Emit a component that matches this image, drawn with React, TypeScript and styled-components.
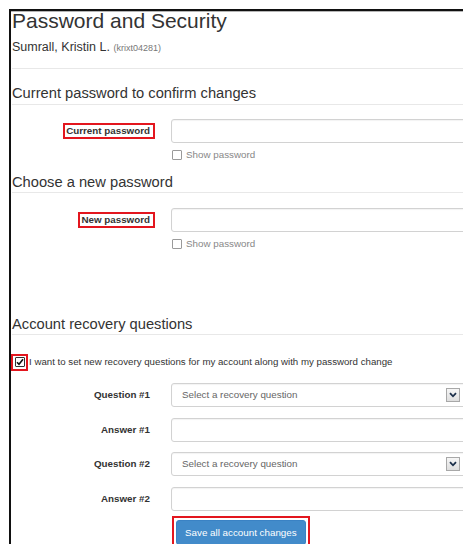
import React from "react";
import styled, { createGlobalStyle } from "styled-components";

const GlobalStyle = createGlobalStyle`
  html, body {
    margin: 0;
    padding: 0;
    background: #fff;
    overflow: hidden;
  }
  body {
    font-family: "Liberation Sans", Arial, Helvetica, sans-serif;
    color: #333;
  }
  * { box-sizing: border-box; }
`;

const Frame = styled.div`
  margin: 9px 0 0 9px;
  width: 480px;
  border-top: 2px solid #111;
  border-left: 2px solid #111;
  box-shadow: inset 0 1px 0 #b5b5b5;
  padding-bottom: 40px;
`;

const Content = styled.div`
  display: flex;
  flex-direction: column;
  padding-left: 1px;
`;

const Title = styled.h1`
  margin: 2px 0 0;
  font-size: 21px;
  line-height: 16px;
  font-weight: normal;
  color: #333;
`;

const UserName = styled.div`
  margin-top: 11px;
  font-size: 12.5px;
  line-height: 14px;
  color: #333;
`;

const UserId = styled.small`
  font-size: 9px;
  color: #777;
`;

const Rule = styled.div<{ $top: number }>`
  margin-top: ${(p) => p.$top}px;
  height: 1px;
  background: #e8e8e8;
`;

const SectionHeading = styled.h2<{ $top: number }>`
  margin: ${(p) => p.$top}px 0 0;
  font-size: 14.7px;
  line-height: 17px;
  font-weight: normal;
  color: #333;
`;

const FieldRow = styled.div<{ $top: number }>`
  margin-top: ${(p) => p.$top}px;
  display: grid;
  grid-template-columns: 138px 1fr;
  column-gap: 21px;
  align-items: center;
`;

const FieldLabel = styled.label`
  text-align: right;
  font-weight: bold;
  font-size: 9.8px;
  line-height: 12px;
  color: #333;
`;

const Marked = styled.span`
  display: inline-block;
  border: 2px solid #e3161e;
  padding: 1px 3px 1px 1px;
  margin-right: -5px;
  line-height: 10px;
`;

const TextInput = styled.input`
  display: block;
  width: 100%;
  height: 24px;
  margin: 0;
  padding: 0 8px;
  border: 1px solid #d2d2d2;
  border-radius: 3px;
  box-shadow: inset 0 1px 1px rgba(0, 0, 0, 0.05);
  background: #fff;
  font: inherit;
  font-size: 9.8px;
  outline: none;
`;

const SelectBox = styled.div`
  display: flex;
  align-items: center;
  justify-content: space-between;
  height: 24px;
  padding: 0 28px 1px 10px;
  border: 1px solid #d2d2d2;
  border-radius: 3px;
  box-shadow: inset 0 1px 1px rgba(0, 0, 0, 0.05);
  background: #fff;
  font-size: 9.8px;
  color: #666;
  cursor: default;
`;

const DropButton = styled.span`
  display: flex;
  align-items: center;
  justify-content: center;
  width: 14px;
  height: 14px;
  border: 1px solid #a8a8a8;
  background: linear-gradient(#f6f6f6, #dedede);
`;

const OptionRow = styled.label<{ $top: number }>`
  margin-top: ${(p) => p.$top}px;
  display: flex;
  align-items: center;
  gap: 4px;
  padding-left: 160px;
  font-size: 9.8px;
  line-height: 14px;
  color: #888;
`;

const Box = styled.span<{ $checked?: boolean }>`
  display: inline-flex;
  align-items: center;
  justify-content: center;
  width: 10px;
  height: 10px;
  border: 1px solid ${(p) => (p.$checked ? "#333" : "#9a9a9a")};
  border-radius: 1px;
  background: #fff;
`;

const ConsentRow = styled.label`
  margin: 18px 0 0 -1px;
  display: flex;
  align-items: center;
  gap: 1px;
  font-size: 9.7px;
  line-height: 18px;
  color: #333;
`;

const BoxFrame = styled.span`
  display: inline-flex;
  padding: 1.5px;
  border: 2px solid #e3161e;
`;

const ActionRow = styled.div`
  margin-top: 5.5px;
  padding-left: 160px;
  display: flex;
`;

const ButtonFrame = styled.span`
  display: inline-flex;
  padding: 2px;
  border: 2px solid #e3161e;
`;

const SaveButton = styled.button`
  height: 25px;
  padding: 0 8px;
  border: 1px solid #3a82c4;
  border-radius: 3px;
  background: #428bca;
  color: #fff;
  font-family: inherit;
  font-size: 9.8px;
  cursor: pointer;
`;

const Chevron = () => (
  <svg width="8" height="6" viewBox="0 0 8 6">
    <path d="M1 1.2 L4 4.3 L7 1.2" fill="none" stroke="#1b2f4a" strokeWidth="1.8" />
  </svg>
);

const Tick = () => (
  <svg width="8" height="8" viewBox="0 0 8 8">
    <path d="M1 4.2 L3 6.3 L7 1.3" fill="none" stroke="#111" strokeWidth="1.6" />
  </svg>
);

const ShowPassword = ({ top }: { top: number }) => (
  <OptionRow $top={top}>
    <Box />
    Show password
  </OptionRow>
);

const QuestionSelect = () => (
  <SelectBox>
    <span>Select a recovery question</span>
    <DropButton>
      <Chevron />
    </DropButton>
  </SelectBox>
);

export default function App() {
  return (
    <>
      <GlobalStyle />
      <Frame>
        <Content>
          <Title>Password and Security</Title>
          <UserName>
            Sumrall, Kristin L. <UserId>(krixt04281)</UserId>
          </UserName>
          <Rule $top={13} />

          <SectionHeading $top={16}>Current password to confirm changes</SectionHeading>
          <Rule $top={2} />
          <FieldRow $top={14}>
            <FieldLabel>
              <Marked>Current password</Marked>
            </FieldLabel>
            <TextInput type="password" />
          </FieldRow>
          <ShowPassword top={5} />

          <SectionHeading $top={12}>Choose a new password</SectionHeading>
          <Rule $top={1} />
          <FieldRow $top={15}>
            <FieldLabel>
              <Marked>New password</Marked>
            </FieldLabel>
            <TextInput type="password" />
          </FieldRow>
          <ShowPassword top={5} />

          <SectionHeading $top={65}>Account recovery questions</SectionHeading>
          <Rule $top={1} />
          <ConsentRow>
            <BoxFrame>
              <Box $checked>
                <Tick />
              </Box>
            </BoxFrame>
            I want to set new recovery questions for my account along with my password change
          </ConsentRow>

          <FieldRow $top={12}>
            <FieldLabel>Question #1</FieldLabel>
            <QuestionSelect />
          </FieldRow>
          <FieldRow $top={10.5}>
            <FieldLabel>Answer #1</FieldLabel>
            <TextInput type="text" />
          </FieldRow>
          <FieldRow $top={10.5}>
            <FieldLabel>Question #2</FieldLabel>
            <QuestionSelect />
          </FieldRow>
          <FieldRow $top={10.5}>
            <FieldLabel>Answer #2</FieldLabel>
            <TextInput type="text" />
          </FieldRow>
          <ActionRow>
            <ButtonFrame>
              <SaveButton type="button">Save all account changes</SaveButton>
            </ButtonFrame>
          </ActionRow>
        </Content>
      </Frame>
    </>
  );
}
